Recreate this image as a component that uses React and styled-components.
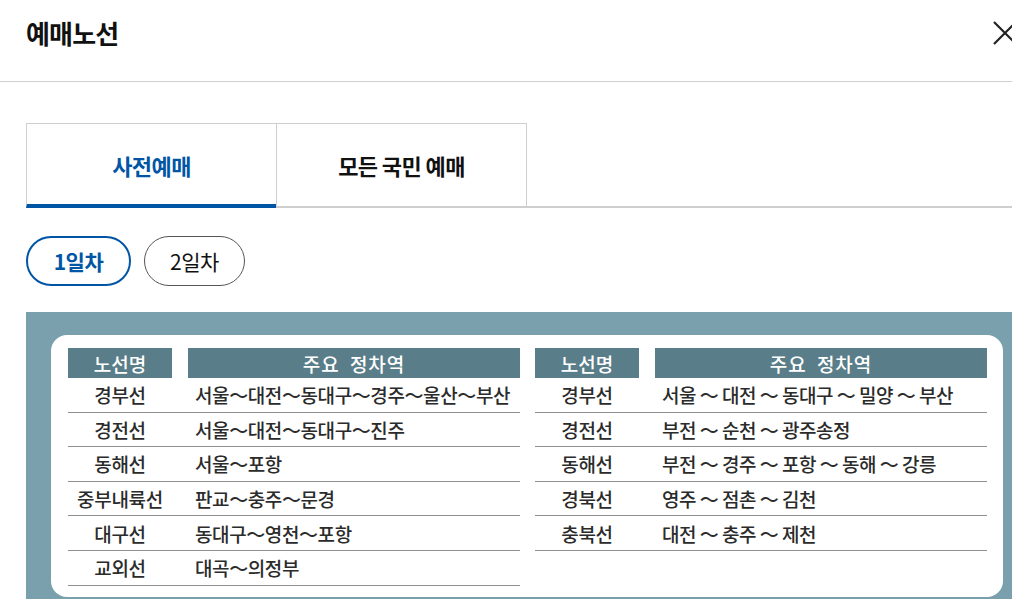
import styled, { createGlobalStyle } from 'styled-components';
import { useState } from 'react';

const GlobalStyle = createGlobalStyle`
  html, body {
    margin: 0;
    padding: 0;
    background: #fff;
    overflow: hidden;
  }
  body {
    font-family: "Noto Sans CJK KR", "Noto Sans", sans-serif;
    color: #111;
  }
  * { box-sizing: border-box; }
`;

const leftRoutes = [
  ['경부선', '서울～대전～동대구～경주～울산～부산'],
  ['경전선', '서울～대전～동대구～진주'],
  ['동해선', '서울～포항'],
  ['중부내륙선', '판교～충주～문경'],
  ['대구선', '동대구～영천～포항'],
  ['교외선', '대곡～의정부'],
];

const rightRoutes = [
  ['경부선', '서울 ～ 대전 ～ 동대구 ～ 밀양 ～ 부산'],
  ['경전선', '부전 ～ 순천 ～ 광주송정'],
  ['동해선', '부전 ～ 경주 ～ 포항 ～ 동해 ～ 강릉'],
  ['경북선', '영주 ～ 점촌 ～ 김천'],
  ['충북선', '대전 ～ 충주 ～ 제천'],
];

const RouteTable = ({ rows, tight }) => (
  <Table>
    <HeadRow>
      <HeadCell>노선명</HeadCell>
      <HeadCell wide>주요 정차역</HeadCell>
    </HeadRow>
    {rows.map(([name, stops]) => (
      <Row key={name}>
        <NameCell>{name}</NameCell>
        <StopsCell tight={tight}>{stops}</StopsCell>
      </Row>
    ))}
  </Table>
);

const App = () => {
  const [tab, setTab] = useState(0);
  const [day, setDay] = useState(0);

  return (
    <>
      <GlobalStyle />
      <Page>
        <Header>
          <Title>예매노선</Title>
          <CloseButton aria-label="닫기">
            <svg width="26" height="26" viewBox="0 0 26 26">
              <path d="M2 2 L24 24 M24 2 L2 24" stroke="#222" strokeWidth="2.2" fill="none" />
            </svg>
          </CloseButton>
        </Header>

        <TabBar>
          <Tab active={tab === 0} onClick={() => setTab(0)}>사전예매</Tab>
          <Tab active={tab === 1} onClick={() => setTab(1)}>모든 국민 예매</Tab>
        </TabBar>

        <Pills>
          <Pill active={day === 0} onClick={() => setDay(0)}>1일차</Pill>
          <Pill active={day === 1} onClick={() => setDay(1)}>2일차</Pill>
        </Pills>

        <Panel>
          <Card>
            <RouteTable rows={leftRoutes} tight />
            <RouteTable rows={rightRoutes} />
          </Card>
        </Panel>
      </Page>
    </>
  );
};

const Page = styled.div`
  width: 1012px;
  height: 599px;
  overflow: hidden;
`;

const Header = styled.header`
  height: 82px;
  display: flex;
  align-items: center;
  padding: 0 0 16px 26px;
  border-bottom: 1px solid #cfcfcf;
`;

const Title = styled.h1`
  margin: 0;
  font-size: 26px;
  font-weight: 700;
  letter-spacing: -0.8px;
  color: #111;
`;

const CloseButton = styled.button`
  margin-left: auto;
  margin-right: -6px;
  width: 26px;
  height: 26px;
  padding: 0;
  border: none;
  background: none;
  display: flex;
`;

const TabBar = styled.div`
  display: flex;
  margin: 41px 0 0 26px;
  border-bottom: 2px solid #cfcfcf;
`;

const Tab = styled.button`
  width: 251px;
  height: 85px;
  margin-bottom: -2px;
  margin-right: -1px;
  border: 1px solid #cfcfcf;
  border-bottom: ${p => p.active ? '4px solid #0055a5' : '2px solid #cfcfcf'};
  background: #fff;
  font-family: inherit;
  font-size: 22px;
  font-weight: 700;
  letter-spacing: -0.6px;
  color: ${p => p.active ? '#0055a5' : '#111'};
  padding: ${p => p.active ? '2px 0 0' : '0'};
  cursor: pointer;
`;

const Pills = styled.div`
  display: flex;
  gap: 13px;
  margin: 28px 0 0 26px;
`;

const Pill = styled.button`
  height: 50px;
  width: ${p => p.active ? '105px' : '101px'};
  border-radius: 25px;
  border: ${p => p.active ? '2px solid #0055a5' : '1px solid #555'};
  background: #fff;
  font-family: inherit;
  font-size: 21px;
  font-weight: ${p => p.active ? 700 : 400};
  letter-spacing: -0.5px;
  color: ${p => p.active ? '#0055a5' : '#111'};
  cursor: pointer;
`;

const Panel = styled.div`
  margin: 26px 0 0 26px;
  background: #7aa0ad;
  padding: 23px 9px 3px 25px;
`;

const Card = styled.div`
  background: #fff;
  border-radius: 16px;
  padding: 13px 17px 11px;
  display: flex;
  gap: 15px;
  height: 262px;
`;

const Table = styled.div`
  width: 452px;
  display: flex;
  flex-direction: column;
`;

const HeadRow = styled.div`
  display: grid;
  grid-template-columns: 104px 332px;
  column-gap: 16px;
  height: 30px;
`;

const HeadCell = styled.div`
  background: #5a7e89;
  color: #fff;
  font-size: 19px;
  font-weight: 500;
  display: flex;
  align-items: center;
  justify-content: center;
  word-spacing: ${p => p.wide ? '5px' : '0'};
  letter-spacing: ${p => p.wide ? '1px' : '0'};
`;

const Row = styled.div`
  display: grid;
  grid-template-columns: 120px 332px;
  height: 34.6px;
  border-bottom: 1.5px solid #8f8f8f;
  align-items: center;
  font-size: 19px;
  font-weight: 500;
  color: #2b2b2b;
`;

const NameCell = styled.div`
  text-align: center;
  width: 104px;
  letter-spacing: -0.3px;
`;

const StopsCell = styled.div`
  padding-left: 7px;
  white-space: nowrap;
  letter-spacing: ${p => p.tight ? '-0.4px' : '-0.5px'};
`;

export default App;
